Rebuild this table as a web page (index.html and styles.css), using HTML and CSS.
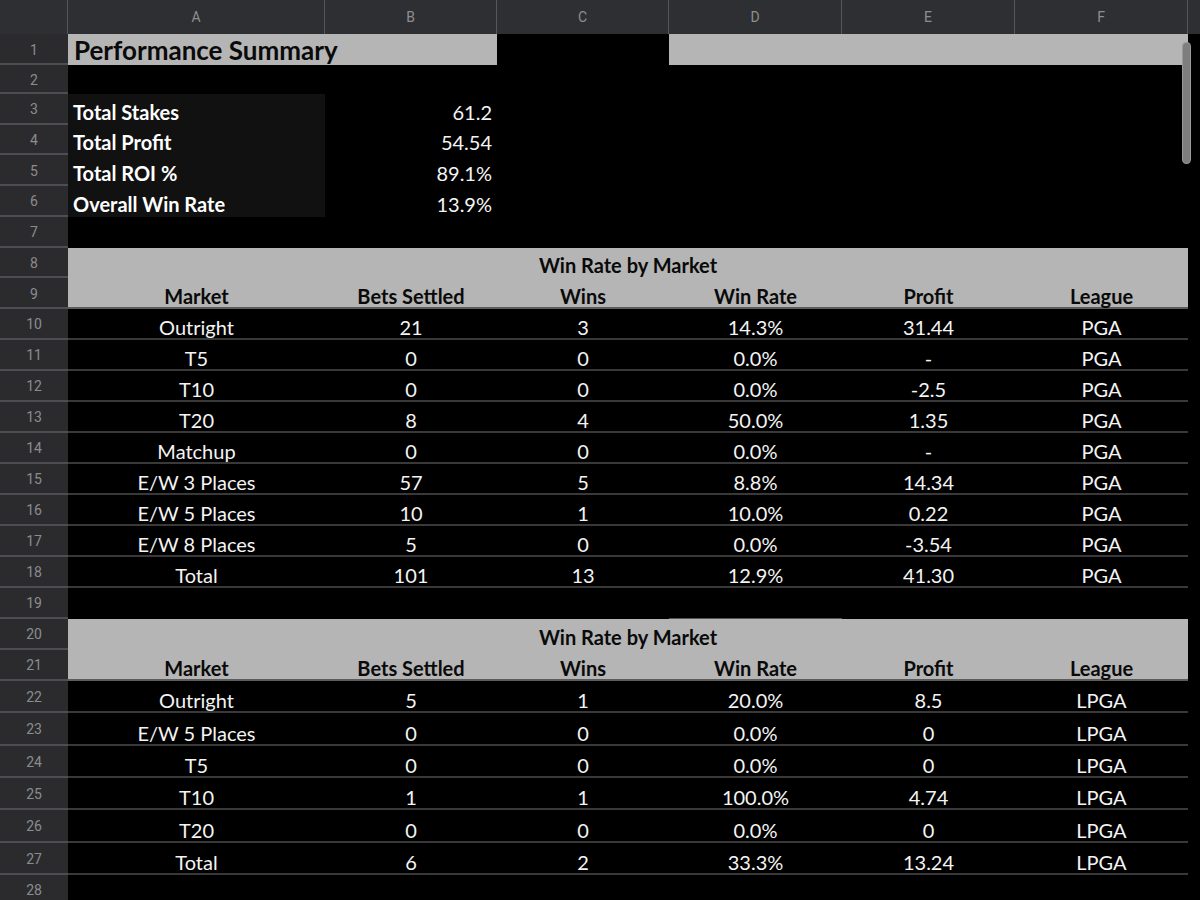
FILE: index.html
```html
<!DOCTYPE html>
<html>
<head>
<meta charset="utf-8">
<link rel="stylesheet" href="styles.css">
</head>
<body>
<div class="sheet">
  <div class="row hdr">
    <div class="hc"></div><div class="hc">A</div><div class="hc">B</div><div class="hc">C</div><div class="hc">D</div><div class="hc">E</div><div class="hc">F</div><div class="hc end"></div>
  </div>

  <div class="row h1">
    <div class="rh">1</div>
    <div class="c g b title l span2">Performance Summary</div>
    <div class="c"></div>
    <div class="c g span3"></div>
    <div class="c"></div>
  </div>
  <div class="row h2"><div class="rh">2</div></div>
  <div class="row ha">
    <div class="rh">3</div>
    <div class="c dk b l">Total Stakes</div><div class="c r">61.2</div>
  </div>
  <div class="row ha">
    <div class="rh">4</div>
    <div class="c dk b l">Total Profit</div><div class="c r">54.54</div>
  </div>
  <div class="row ha">
    <div class="rh">5</div>
    <div class="c dk b l">Total ROI %</div><div class="c r">89.1%</div>
  </div>
  <div class="row ha">
    <div class="rh">6</div>
    <div class="c dk b l">Overall Win Rate</div><div class="c r">13.9%</div>
  </div>
  <div class="row ha"><div class="rh">7</div></div>
  <div class="row ha">
    <div class="rh">8</div>
    <div class="c g b span6">Win Rate by Market</div>
  </div>
  <div class="row ha">
    <div class="rh">9</div>
    <div class="c g b th">Market</div><div class="c g b th">Bets Settled</div><div class="c g b th">Wins</div><div class="c g b th">Win Rate</div><div class="c g b th">Profit</div><div class="c g b th">League</div>
  </div>

  <div class="row hb"><div class="rh">10</div><div class="c ln">Outright</div><div class="c ln">21</div><div class="c ln">3</div><div class="c ln">14.3%</div><div class="c ln">31.44</div><div class="c ln">PGA</div></div>
  <div class="row hb"><div class="rh">11</div><div class="c ln">T5</div><div class="c ln">0</div><div class="c ln">0</div><div class="c ln">0.0%</div><div class="c ln">-</div><div class="c ln">PGA</div></div>
  <div class="row hb"><div class="rh">12</div><div class="c ln">T10</div><div class="c ln">0</div><div class="c ln">0</div><div class="c ln">0.0%</div><div class="c ln">-2.5</div><div class="c ln">PGA</div></div>
  <div class="row hb"><div class="rh">13</div><div class="c ln">T20</div><div class="c ln">8</div><div class="c ln">4</div><div class="c ln">50.0%</div><div class="c ln">1.35</div><div class="c ln">PGA</div></div>
  <div class="row hb"><div class="rh">14</div><div class="c ln">Matchup</div><div class="c ln">0</div><div class="c ln">0</div><div class="c ln">0.0%</div><div class="c ln">-</div><div class="c ln">PGA</div></div>
  <div class="row hb"><div class="rh">15</div><div class="c ln">E/W 3 Places</div><div class="c ln">57</div><div class="c ln">5</div><div class="c ln">8.8%</div><div class="c ln">14.34</div><div class="c ln">PGA</div></div>
  <div class="row hb"><div class="rh">16</div><div class="c ln">E/W 5 Places</div><div class="c ln">10</div><div class="c ln">1</div><div class="c ln">10.0%</div><div class="c ln">0.22</div><div class="c ln">PGA</div></div>
  <div class="row hb"><div class="rh">17</div><div class="c ln">E/W 8 Places</div><div class="c ln">5</div><div class="c ln">0</div><div class="c ln">0.0%</div><div class="c ln">-3.54</div><div class="c ln">PGA</div></div>
  <div class="row hb"><div class="rh">18</div><div class="c ln">Total</div><div class="c ln">101</div><div class="c ln">13</div><div class="c ln">12.9%</div><div class="c ln">41.30</div><div class="c ln">PGA</div></div>
  <div class="row hb"><div class="rh">19</div><div class="c"></div><div class="c"></div><div class="c"></div><div class="c topline"></div></div>

  <div class="row hb">
    <div class="rh">20</div>
    <div class="c g b span6">Win Rate by Market</div>
  </div>
  <div class="row hb">
    <div class="rh">21</div>
    <div class="c g b th">Market</div><div class="c g b th">Bets Settled</div><div class="c g b th">Wins</div><div class="c g b th">Win Rate</div><div class="c g b th">Profit</div><div class="c g b th">League</div>
  </div>

  <div class="row hc3"><div class="rh">22</div><div class="c ln">Outright</div><div class="c ln">5</div><div class="c ln">1</div><div class="c ln">20.0%</div><div class="c ln">8.5</div><div class="c ln">LPGA</div></div>
  <div class="row hc3"><div class="rh">23</div><div class="c ln">E/W 5 Places</div><div class="c ln">0</div><div class="c ln">0</div><div class="c ln">0.0%</div><div class="c ln">0</div><div class="c ln">LPGA</div></div>
  <div class="row hc3"><div class="rh">24</div><div class="c ln">T5</div><div class="c ln">0</div><div class="c ln">0</div><div class="c ln">0.0%</div><div class="c ln">0</div><div class="c ln">LPGA</div></div>
  <div class="row hc3"><div class="rh">25</div><div class="c ln">T10</div><div class="c ln">1</div><div class="c ln">1</div><div class="c ln">100.0%</div><div class="c ln">4.74</div><div class="c ln">LPGA</div></div>
  <div class="row hc3"><div class="rh">26</div><div class="c ln">T20</div><div class="c ln">0</div><div class="c ln">0</div><div class="c ln">0.0%</div><div class="c ln">0</div><div class="c ln">LPGA</div></div>
  <div class="row hc3"><div class="rh">27</div><div class="c ln">Total</div><div class="c ln">6</div><div class="c ln">2</div><div class="c ln">33.3%</div><div class="c ln">13.24</div><div class="c ln">LPGA</div></div>
  <div class="row hb"><div class="rh">28</div></div>

  <div class="scrollbar"></div>
</div>
</body>
</html>
```

FILE: styles.css
```css
html, body {
  margin: 0;
  padding: 0;
  background: #000;
}
.sheet {
  position: relative;
  width: 1200px;
  height: 900px;
  overflow: hidden;
  background: #000;
}
.row {
  display: grid;
  grid-template-columns: 68px 257px 172px 172px 173px 173px 173px 12px;
}
.hdr {
  height: 34px;
  background: #2e2f33;
}
.hc {
  display: flex;
  align-items: center;
  justify-content: center;
  color: #8e8e90;
  font-family: Roboto, "Liberation Sans", sans-serif;
  font-size: 14px;
  border-right: 1px solid #56575b;
}
.hc.end { border-right: none; }

.h1 { height: 31px; }
.h2 { height: 29px; }
.ha { height: 30.71px; }
.hb { height: 31px; }
.hc3 { height: 32.33px; }

.rh {
  display: flex;
  align-items: center;
  justify-content: center;
  background: #2b2b2e;
  box-shadow: inset 0 -2px #4e4e52;
  color: #8c8c8e;
  font-family: Roboto, "Liberation Sans", sans-serif;
  font-size: 14px;
}

.c {
  display: flex;
  align-items: flex-end;
  justify-content: center;
  font-family: Lato, "Open Sans", sans-serif;
  font-size: 20px;
  line-height: 24px;
  color: #f4f4f4;
  white-space: nowrap;
  padding-bottom: 1px;
  box-sizing: border-box;
}
.l { justify-content: flex-start; padding-left: 5px; }
.r { justify-content: flex-end; padding-right: 5px; }
.b { font-weight: 700; }
.g { background: #b5b5b5; color: #0a0a0a; }
.dk { background: #111111; color: #fff; }
.title { font-size: 26px; line-height: 30px; padding-left: 6px; padding-bottom: 0; }
.span2 { grid-column: span 2; }
.span3 { grid-column: span 3; }
.span6 { grid-column: span 6; }
.ln { box-shadow: inset 0 -2px #393939; }
.th { box-shadow: inset 0 -2px #5c5c5c; }
.topline { box-shadow: inset 0 -1px #555; }

.scrollbar {
  position: absolute;
  left: 1183px;
  top: 43px;
  width: 7px;
  height: 120px;
  border-radius: 4px;
  background: #7e7e7e;
  box-shadow: 0 0 0 1px #9a9a9a;
}
```
